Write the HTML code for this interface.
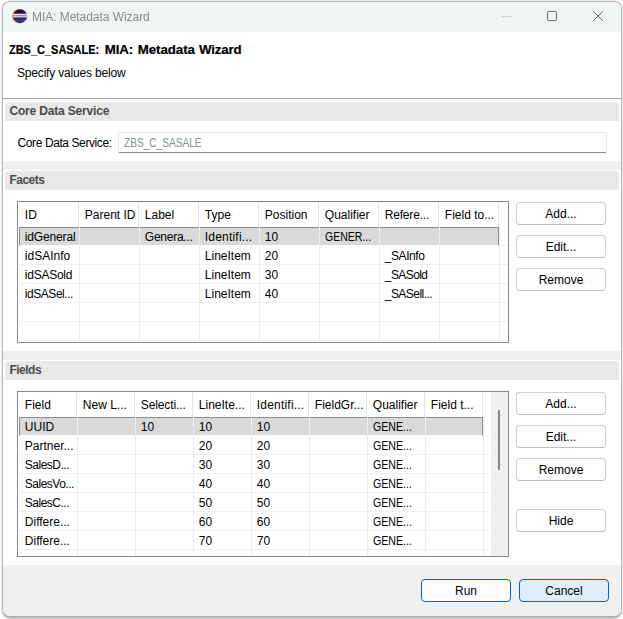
<!DOCTYPE html>
<html><head><meta charset="utf-8"><title>MIA: Metadata Wizard</title>
<style>
html,body{margin:0;padding:0;}
body{width:623px;height:619px;overflow:hidden;background:#fff;position:relative;font-family:"Liberation Sans",sans-serif;font-size:12px;color:#000;}
.abs{position:absolute;}
.win{position:absolute;left:2px;top:1px;width:618px;height:614px;border:1px solid #b4b4b4;border-bottom-color:#a8a8a8;border-radius:8px;background:#fefefe;overflow:hidden;box-shadow:0 2px 1px rgba(0,0,0,.2),0 0 3px rgba(0,0,0,.15);}
.win *{position:absolute;box-sizing:border-box;white-space:nowrap;}
.tbar{left:0;top:0;width:618px;height:30px;background:#f0f4f5;}
.ttl{left:29.2px;top:7px;color:#8b8b8b;will-change:transform;letter-spacing:-.05px;font-size:12px;line-height:16px;}
.hdr{left:0;top:30px;width:618px;height:66px;background:#fff;}
.h1{top:39px;font-weight:bold;-webkit-text-stroke:.2px #000;font-size:13.3px;line-height:18px;}
.sep{left:0;top:96px;width:618px;height:1px;background:#a0a0a0;}
.sep2{left:0;top:97px;width:618px;height:1px;background:#fff;}
.band{left:2px;width:614px;height:19px;background:#e8e8e8;border-radius:4px 4px 0 0;}
.band span{left:4.4px;top:1px;font-weight:bold;color:#4a4a4a;line-height:16px;}
.gap{left:0;width:618px;height:9px;background:#f0f0f0;}
.btn{width:90px;height:23px;border:1px solid #d0d0d0;border-bottom-color:#bdbdbd;border-radius:4px;background:#fdfdfd;text-align:center;line-height:22px;}
.tbl{background:#fff;border:1px solid #828790;overflow:hidden;}
.tbl div{line-height:16px;}
.vl{width:1px;background:#ececec;}
.hl{height:1px;background:#f0f0f0;}
.hv{background:#e2e2e2;}
.sel{background:#d9d9d9;border:1px solid #8c8c8c;border-bottom:1px solid #fff;}
</style></head><body>
<div class="win">
  <div class="tbar"></div>
  <svg style="left:9px;top:6px" width="16" height="16" viewBox="0 0 16 16"><defs><linearGradient id="eg" x1="0" y1="0" x2="0" y2="1"><stop offset="0" stop-color="#2c0d55"/><stop offset=".6" stop-color="#2c1258"/><stop offset=".8" stop-color="#3a3f80"/><stop offset="1" stop-color="#2f1a5c"/></linearGradient><clipPath id="ec"><ellipse cx="7.5" cy="8.2" rx="7.5" ry="7.05"/></clipPath></defs><ellipse cx="7.4" cy="8.2" rx="7.4" ry="7.1" fill="#f7a030"/><ellipse cx="8" cy="8.2" rx="7.1" ry="6.95" fill="url(#eg)"/><g clip-path="url(#ec)"><rect x="1" y="5.8" width="15" height="3.6" fill="#fff"/><rect x="1" y="6.8" width="15" height="1.7" fill="#9b94a6"/></g></svg>
  <div class="ttl">MIA: Metadata Wizard</div>
  <svg style="left:543px;top:8px" width="12" height="12" viewBox="0 0 12 12"><rect x="1.5" y="1.5" width="9" height="9" rx="1.3" fill="none" stroke="#666" stroke-width="1"/></svg>
  <svg style="left:589px;top:8px" width="12" height="12" viewBox="0 0 12 12"><path d="M1.2 1.4 L10.8 10.8 M10.8 1.4 L1.2 10.8" stroke="#666" stroke-width="1" fill="none"/></svg>
  <div style="left:499px;top:14px;width:10px;height:1px;background:#d3d6d9"></div>
  <div class="hdr"></div>
  <div class="h1" style="left:6.2px;transform:scaleX(.825);transform-origin:0 0">ZBS_C_SASALE:</div>
  <div class="h1" style="left:101.8px;letter-spacing:-.1px">MIA:</div>
  <div class="h1" style="left:134.8px;letter-spacing:-.08px">Metadata</div>
  <div class="h1" style="left:196px;letter-spacing:-.15px">Wizard</div>
  <div style="left:14px;top:63px;line-height:16px;letter-spacing:-.18px">Specify values below</div>
  <div class="sep"></div><div class="sep2"></div>

  <div class="band" style="top:100px"><span style="letter-spacing:-.17px">Core Data Service</span></div>
  <div style="left:14.6px;top:133px;line-height:16px;letter-spacing:-.41px">Core Data Service:</div>
  <div style="left:115px;top:130px;width:489px;height:21px;background:#fff;border:1px solid #ebebeb;border-bottom:1px solid #8a8a8a;border-radius:2px"><div style="left:5px;top:2px;color:#84928a;line-height:16px;transform:scaleX(.842);transform-origin:0 0">ZBS_C_SASALE</div></div>
  <div class="gap" style="top:159px"></div>

  <div class="band" style="top:169px"><span style="letter-spacing:-.5px">Facets</span></div>
  <div class="tbl" id="t1" style="left:14px;top:199px;width:492px;height:142px">
    <div class="hl" style="left:1px;top:43px;width:489px"></div>
    <div class="hl" style="left:1px;top:62px;width:489px"></div>
    <div class="hl" style="left:1px;top:81px;width:489px"></div>
    <div class="hl" style="left:1px;top:100px;width:489px"></div>
    <div class="hl" style="left:1px;top:119px;width:489px"></div>
    <div class="hl" style="left:1px;top:138px;width:489px"></div>
    <div class="sel" style="left:1px;top:25px;width:480px;height:19px"></div>
    <div class="vl hv" style="left:60px;top:1px;height:24px"></div>
    <div class="vl" style="left:61px;top:25px;height:115px"></div>
    <div class="vl hv" style="left:120px;top:1px;height:24px"></div>
    <div class="vl" style="left:121px;top:25px;height:115px"></div>
    <div class="vl hv" style="left:180px;top:1px;height:24px"></div>
    <div class="vl" style="left:181px;top:25px;height:115px"></div>
    <div class="vl hv" style="left:240px;top:1px;height:24px"></div>
    <div class="vl" style="left:241px;top:25px;height:115px"></div>
    <div class="vl hv" style="left:300px;top:1px;height:24px"></div>
    <div class="vl" style="left:301px;top:25px;height:115px"></div>
    <div class="vl hv" style="left:360px;top:1px;height:24px"></div>
    <div class="vl" style="left:361px;top:25px;height:115px"></div>
    <div class="vl hv" style="left:420px;top:1px;height:24px"></div>
    <div class="vl" style="left:421px;top:25px;height:115px"></div>
    <div class="vl hv" style="left:480px;top:1px;height:24px"></div>
    <div class="vl" style="left:481px;top:25px;height:115px"></div>
    <div class="ht" style="left:6.8px;top:5px">ID</div>
    <div class="ht" style="left:66.8px;top:5px">Parent ID</div>
    <div class="ht" style="left:126.8px;top:5px">Label</div>
    <div class="ht" style="left:186.8px;top:5px">Type</div>
    <div class="ht" style="left:246.8px;top:5px">Position</div>
    <div class="ht" style="left:306.8px;top:5px">Qualifier</div>
    <div class="ht" style="left:366.8px;top:5px;letter-spacing:-0.2px">Refere...</div>
    <div class="ht" style="left:426.8px;top:5px">Field to...</div>
    <div class="ct" style="left:6.8px;top:27px;letter-spacing:-0.15px">idGeneral</div>
    <div class="ct" style="left:126.8px;top:27px;letter-spacing:-0.25px">Genera...</div>
    <div class="ct" style="left:186.8px;top:27px;letter-spacing:0.2px">Identifi...</div>
    <div class="ct" style="left:246.8px;top:27px">10</div>
    <div class="ct" style="left:306.8px;top:27px;transform:scaleX(0.875);transform-origin:0 0">GENER...</div>
    <div class="ct" style="left:6.8px;top:46px">idSAInfo</div>
    <div class="ct" style="left:186.8px;top:46px">LineItem</div>
    <div class="ct" style="left:246.8px;top:46px">20</div>
    <div class="ct" style="left:366.8px;top:46px;letter-spacing:-0.43px">_SAInfo</div>
    <div class="ct" style="left:6.8px;top:65px;letter-spacing:-0.25px">idSASold</div>
    <div class="ct" style="left:186.8px;top:65px">LineItem</div>
    <div class="ct" style="left:246.8px;top:65px">30</div>
    <div class="ct" style="left:366.8px;top:65px;letter-spacing:-0.58px">_SASold</div>
    <div class="ct" style="left:6.8px;top:84px;letter-spacing:-0.45px">idSASel...</div>
    <div class="ct" style="left:186.8px;top:84px">LineItem</div>
    <div class="ct" style="left:246.8px;top:84px">40</div>
    <div class="ct" style="left:366.8px;top:84px;letter-spacing:-0.55px">_SASell...</div>
    
  </div>
  <div class="btn" style="left:513px;top:200px">Add...</div>
  <div class="btn" style="left:513px;top:233px">Edit...</div>
  <div class="btn" style="left:513px;top:266px">Remove</div>
  <div class="gap" style="top:349px"></div>

  <div class="band" style="top:359px"><span style="letter-spacing:-.5px">Fields</span></div>
  <div class="tbl" id="t2" style="left:14px;top:389px;width:492px;height:166px">
    <div class="hl" style="left:1px;top:43px;width:471px"></div>
    <div class="hl" style="left:1px;top:62px;width:471px"></div>
    <div class="hl" style="left:1px;top:81px;width:471px"></div>
    <div class="hl" style="left:1px;top:100px;width:471px"></div>
    <div class="hl" style="left:1px;top:119px;width:471px"></div>
    <div class="hl" style="left:1px;top:138px;width:471px"></div>
    <div class="hl" style="left:1px;top:157px;width:471px"></div>
    <div class="sel" style="left:1px;top:25px;width:464px;height:19px"></div>
    <div class="vl hv" style="left:58px;top:1px;height:24px"></div>
    <div class="vl" style="left:59px;top:25px;height:139px"></div>
    <div class="vl hv" style="left:116px;top:1px;height:24px"></div>
    <div class="vl" style="left:117px;top:25px;height:139px"></div>
    <div class="vl hv" style="left:174px;top:1px;height:24px"></div>
    <div class="vl" style="left:175px;top:25px;height:139px"></div>
    <div class="vl hv" style="left:232px;top:1px;height:24px"></div>
    <div class="vl" style="left:233px;top:25px;height:139px"></div>
    <div class="vl hv" style="left:290px;top:1px;height:24px"></div>
    <div class="vl" style="left:291px;top:25px;height:139px"></div>
    <div class="vl hv" style="left:348px;top:1px;height:24px"></div>
    <div class="vl" style="left:349px;top:25px;height:139px"></div>
    <div class="vl hv" style="left:406px;top:1px;height:24px"></div>
    <div class="vl" style="left:407px;top:25px;height:139px"></div>
    <div class="vl hv" style="left:464px;top:1px;height:24px"></div>
    <div class="vl" style="left:465px;top:25px;height:139px"></div>
    <div class="ht" style="left:6.8px;top:5px">Field</div>
    <div class="ht" style="left:64.8px;top:5px">New L...</div>
    <div class="ht" style="left:122.8px;top:5px;letter-spacing:-0.12px">Selecti...</div>
    <div class="ht" style="left:180.8px;top:5px">LineIte...</div>
    <div class="ht" style="left:238.8px;top:5px;letter-spacing:0.2px">Identifi...</div>
    <div class="ht" style="left:296.8px;top:5px">FieldGr...</div>
    <div class="ht" style="left:354.8px;top:5px">Qualifier</div>
    <div class="ht" style="left:412.8px;top:5px">Field t...</div>
    <div class="ct" style="left:6.8px;top:27px">UUID</div>
    <div class="ct" style="left:122.8px;top:27px">10</div>
    <div class="ct" style="left:180.8px;top:27px">10</div>
    <div class="ct" style="left:238.8px;top:27px">10</div>
    <div class="ct" style="left:354.8px;top:27px;transform:scaleX(0.885);transform-origin:0 0">GENE...</div>
    <div class="ct" style="left:6.8px;top:46px">Partner...</div>
    <div class="ct" style="left:180.8px;top:46px">20</div>
    <div class="ct" style="left:238.8px;top:46px">20</div>
    <div class="ct" style="left:354.8px;top:46px;transform:scaleX(0.885);transform-origin:0 0">GENE...</div>
    <div class="ct" style="left:6.8px;top:65px;letter-spacing:-0.5px">SalesD...</div>
    <div class="ct" style="left:180.8px;top:65px">30</div>
    <div class="ct" style="left:238.8px;top:65px">30</div>
    <div class="ct" style="left:354.8px;top:65px;transform:scaleX(0.885);transform-origin:0 0">GENE...</div>
    <div class="ct" style="left:6.8px;top:84px;letter-spacing:-0.5px">SalesVo...</div>
    <div class="ct" style="left:180.8px;top:84px">40</div>
    <div class="ct" style="left:238.8px;top:84px">40</div>
    <div class="ct" style="left:354.8px;top:84px;transform:scaleX(0.885);transform-origin:0 0">GENE...</div>
    <div class="ct" style="left:6.8px;top:103px;letter-spacing:-0.5px">SalesC...</div>
    <div class="ct" style="left:180.8px;top:103px">50</div>
    <div class="ct" style="left:238.8px;top:103px">50</div>
    <div class="ct" style="left:354.8px;top:103px;transform:scaleX(0.885);transform-origin:0 0">GENE...</div>
    <div class="ct" style="left:6.8px;top:122px">Differe...</div>
    <div class="ct" style="left:180.8px;top:122px">60</div>
    <div class="ct" style="left:238.8px;top:122px">60</div>
    <div class="ct" style="left:354.8px;top:122px;transform:scaleX(0.885);transform-origin:0 0">GENE...</div>
    <div class="ct" style="left:6.8px;top:141px">Differe...</div>
    <div class="ct" style="left:180.8px;top:141px">70</div>
    <div class="ct" style="left:238.8px;top:141px">70</div>
    <div class="ct" style="left:354.8px;top:141px;transform:scaleX(0.885);transform-origin:0 0">GENE...</div>
    <div style="left:473px;top:0;width:18px;height:164px;background:#f0f0f0"></div><div style="left:480px;top:18px;width:2px;height:60px;background:#868686;border-radius:1px"></div>
  </div>
  <div class="btn" style="left:513px;top:390px">Add...</div>
  <div class="btn" style="left:513px;top:423px">Edit...</div>
  <div class="btn" style="left:513px;top:456px">Remove</div>
  <div class="btn" style="left:513px;top:507px">Hide</div>

  <div style="left:0;top:563px;width:618px;height:60px;background:#f0f0f0"></div>
  <div class="btn" style="left:418px;top:577px;width:90px;height:23px;border:1px solid #0067c0;background:#fdfdfd;line-height:22px">Run</div>
  <div class="btn" style="left:516px;top:577px;width:90px;height:23px;border:1px solid #0067c0;background:#e0eef9;line-height:22px">Cancel</div>
</div>
</body></html>
